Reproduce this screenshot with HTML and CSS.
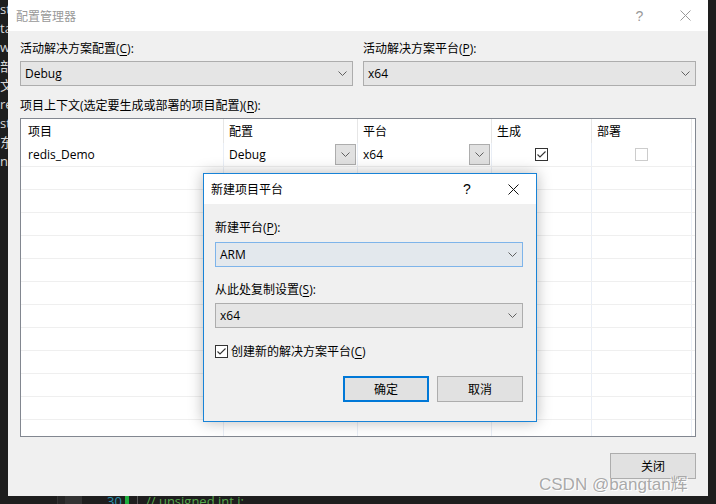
FILE: index.html
```html
<!DOCTYPE html>
<html lang="zh-CN">
<head>
    <meta charset="UTF-8">
    <meta name="viewport" content="width=device-width, initial-scale=1.0">
    <title>配置管理器</title>
    <link rel="stylesheet" href="styles.css">
</head>
<body>
  <!-- IDE behind the dialogs -->
  <div class="ide-side">
    <div>st</div>
    <div>ta</div>
    <div>w</div>
    <div>部</div>
    <div>文</div>
    <div>re</div>
    <div>st</div>
    <div>东</div>
    <div>nc</div>
  </div>

  <!-- Configuration Manager -->
  <div class="window">
    <div class="titlebar">
      <span class="title">配置管理器</span>
      <span class="help">?</span>
      <span class="close">
        <svg width="11" height="11" viewBox="0 0 11 11"><path d="M0.5 0.5 L10.5 10.5 M10.5 0.5 L0.5 10.5" stroke="#9a9a9a" stroke-width="1" fill="none"/></svg>
      </span>
    </div>

    <div class="window-body">
      <div class="top-fields">
        <div class="field">
          <div class="label">活动解决方案配置(<u>C</u>):</div>
          <div class="combo">
            <span>Debug</span>
            <svg class="chevron" width="9" height="5" viewBox="0 0 9 5"><path d="M0.5 0.5 L4.5 4.5 L8.5 0.5" stroke="#606060" fill="none"/></svg>
          </div>
        </div>
        <div class="field">
          <div class="label">活动解决方案平台(<u>P</u>):</div>
          <div class="combo">
            <span>x64</span>
            <svg class="chevron" width="9" height="5" viewBox="0 0 9 5"><path d="M0.5 0.5 L4.5 4.5 L8.5 0.5" stroke="#606060" fill="none"/></svg>
          </div>
        </div>
      </div>

      <div class="label grid-label">项目上下文(选定要生成或部署的项目配置)(<u>R</u>):</div>

      <div class="grid">
        <div class="grid-row head">
          <div class="cell first-col">项目</div>
          <div class="cell">配置</div>
          <div class="cell">平台</div>
          <div class="cell">生成</div>
          <div class="cell">部署</div>
          <div class="cell"></div>
        </div>
        <div class="grid-row tall">
          <div class="cell first-col">redis_Demo</div>
          <div class="cell drop">
            <span>Debug</span>
            <span class="drop-btn"><svg width="9" height="5" viewBox="0 0 9 5"><path d="M0.5 0.5 L4.5 4.5 L8.5 0.5" stroke="#606060" fill="none"/></svg></span>
          </div>
          <div class="cell drop">
            <span>x64</span>
            <span class="drop-btn"><svg width="9" height="5" viewBox="0 0 9 5"><path d="M0.5 0.5 L4.5 4.5 L8.5 0.5" stroke="#606060" fill="none"/></svg></span>
          </div>
          <div class="cell center">
            <span class="checkbox"><svg width="11" height="11" viewBox="0 0 11 11"><path d="M1.5 5.5 L4 8 L9.5 2.5" stroke="#333" stroke-width="1.1" fill="none"/></svg></span>
          </div>
          <div class="cell center"><span class="checkbox disabled"></span></div>
          <div class="cell"></div>
        </div>
        <div class="grid-row"><div class="cell"></div><div class="cell"></div><div class="cell"></div><div class="cell"></div><div class="cell"></div><div class="cell"></div></div>
        <div class="grid-row"><div class="cell"></div><div class="cell"></div><div class="cell"></div><div class="cell"></div><div class="cell"></div><div class="cell"></div></div>
        <div class="grid-row"><div class="cell"></div><div class="cell"></div><div class="cell"></div><div class="cell"></div><div class="cell"></div><div class="cell"></div></div>
        <div class="grid-row"><div class="cell"></div><div class="cell"></div><div class="cell"></div><div class="cell"></div><div class="cell"></div><div class="cell"></div></div>
        <div class="grid-row"><div class="cell"></div><div class="cell"></div><div class="cell"></div><div class="cell"></div><div class="cell"></div><div class="cell"></div></div>
        <div class="grid-row"><div class="cell"></div><div class="cell"></div><div class="cell"></div><div class="cell"></div><div class="cell"></div><div class="cell"></div></div>
        <div class="grid-row"><div class="cell"></div><div class="cell"></div><div class="cell"></div><div class="cell"></div><div class="cell"></div><div class="cell"></div></div>
        <div class="grid-row"><div class="cell"></div><div class="cell"></div><div class="cell"></div><div class="cell"></div><div class="cell"></div><div class="cell"></div></div>
        <div class="grid-row"><div class="cell"></div><div class="cell"></div><div class="cell"></div><div class="cell"></div><div class="cell"></div><div class="cell"></div></div>
        <div class="grid-row"><div class="cell"></div><div class="cell"></div><div class="cell"></div><div class="cell"></div><div class="cell"></div><div class="cell"></div></div>
        <div class="grid-row"><div class="cell"></div><div class="cell"></div><div class="cell"></div><div class="cell"></div><div class="cell"></div><div class="cell"></div></div>
        <div class="grid-row"><div class="cell"></div><div class="cell"></div><div class="cell"></div><div class="cell"></div><div class="cell"></div><div class="cell"></div></div>
      </div>

      <div class="footer">
        <button class="btn">关闭</button>
      </div>
    </div>
  </div>

  <div class="ide-right"></div>

  <!-- code editor strip under the window -->
  <div class="ide-bottom">
    <span class="gutter-a"></span>
    <span class="gutter-b"></span>
    <span class="line-no">30</span>
    <span class="change-bar"></span>
    <span class="fold-line"></span>
    <span class="code">// unsigned int i;</span>
  </div>

  <!-- New Project Platform dialog -->
  <div class="dialog">
    <div class="titlebar dialog-titlebar">
      <span class="title">新建项目平台</span>
      <span class="help">?</span>
      <span class="close">
        <svg width="11" height="11" viewBox="0 0 11 11"><path d="M0.5 0.5 L10.5 10.5 M10.5 0.5 L0.5 10.5" stroke="#111" stroke-width="1" fill="none"/></svg>
      </span>
    </div>
    <div class="dialog-body">
      <div class="label">新建平台(<u>P</u>):</div>
      <div class="combo focused">
        <span>ARM</span>
        <svg class="chevron" width="9" height="5" viewBox="0 0 9 5"><path d="M0.5 0.5 L4.5 4.5 L8.5 0.5" stroke="#606060" fill="none"/></svg>
      </div>
      <div class="label copy-label">从此处复制设置(<u>S</u>):</div>
      <div class="combo">
        <span>x64</span>
        <svg class="chevron" width="9" height="5" viewBox="0 0 9 5"><path d="M0.5 0.5 L4.5 4.5 L8.5 0.5" stroke="#606060" fill="none"/></svg>
      </div>
      <div class="check-row">
        <span class="checkbox"><svg width="11" height="11" viewBox="0 0 11 11"><path d="M1.5 5.5 L4 8 L9.5 2.5" stroke="#333" stroke-width="1.1" fill="none"/></svg></span>
        <span>创建新的解决方案平台(<u>C</u>)</span>
      </div>
      <div class="dialog-buttons">
        <button class="btn default">确定</button>
        <button class="btn">取消</button>
      </div>
    </div>
  </div>

  <div class="watermark">CSDN @bangtan辉</div>
</body>
</html>
```

FILE: styles.css
```css
* {
    box-sizing: border-box;
}

body {
    margin: 0;
    width: 716px;
    height: 504px;
    overflow: hidden;
    position: relative;
    background-color: #1e1e1e;
    display: grid;
    grid-template-columns: 8px 700px 8px;
    grid-template-rows: 496px 8px;
    font-family: "Open Sans", "Noto Sans CJK SC", sans-serif;
    font-size: 12px;
    color: #000;
}

u {
    text-decoration-thickness: 1px;
    text-underline-offset: 2px;
}

/* IDE around the window */
.ide-side {
    overflow: hidden;
    white-space: nowrap;
    color: #d6d6d6;
    font-size: 13px;
    line-height: 19px;
    padding-top: 0;
}

.ide-right {
    background-color: #1e1e1e;
}

.ide-bottom {
    grid-column: 1 / 4;
    display: flex;
    overflow: hidden;
    height: 8px;
    font-size: 13px;
    line-height: 13px;
}

.ide-bottom > span {
    flex-shrink: 0;
    margin-top: -1px;
}

.gutter-a {
    width: 8px;
    margin-left: 57px;
    background-color: #262626;
    border-left: 1px solid #333;
}

.gutter-b {
    width: 17px;
    background-color: #333;
}

.line-no {
    margin-left: 25px;
    color: #2b91af;
    width: 18px;
}

.change-bar {
    width: 4px;
    background-color: #1fae3e;
}

.fold-line {
    width: 1px;
    margin-left: 8px;
    background-color: #555;
}

.code {
    margin-left: 8px;
    color: #57a64a;
}

/* Main window */
.window {
    background-color: #f0f0f0;
    display: flex;
    flex-direction: column;
}

.titlebar {
    height: 31px;
    background-color: #fff;
    display: flex;
    align-items: center;
    padding-left: 8px;
    flex-shrink: 0;
}

.titlebar .title {
    flex: 1;
    color: #999;
}

.titlebar .help {
    width: 45px;
    text-align: center;
    color: #999;
    font-family: "Liberation Sans", sans-serif;
    font-size: 14px;
}

.titlebar .close {
    width: 46px;
    display: flex;
    justify-content: center;
}

.window-body {
    padding: 9px 12px 0 12px;
    display: flex;
    flex-direction: column;
}

.label {
    line-height: 18px;
    height: 18px;
    white-space: nowrap;
}

.top-fields {
    display: flex;
    gap: 10px;
}

.field {
    flex: 1;
}

.combo {
    margin-top: 3px;
    height: 25px;
    border: 1px solid #adadad;
    background-color: #e5e5e5;
    display: flex;
    align-items: center;
    justify-content: space-between;
    padding: 0 5px 0 4px;
}

.grid-label {
    margin-top: 11px;
    margin-bottom: 3px;
}

.grid {
    height: 319px;
    border: 1px solid #828790;
    background-color: #fff;
    overflow: hidden;
}

.grid-row {
    display: grid;
    grid-template-columns: 203px 134px 134px 100px 100px 1fr;
    height: 23px;
    border-bottom: 1px solid #efefef;
}

.grid-row.head {
    height: 24px;
    border-bottom: none;
}

.grid-row.tall {
    height: 24px;
}

.cell {
    border-right: 1px solid #e9eef6;
    padding-left: 5px;
    display: flex;
    align-items: center;
    white-space: nowrap;
}

.head .cell {
    border-right-color: #e6e6e6;
}

.cell:last-child {
    border-right: none;
}

.cell.first-col {
    padding-left: 7px;
}

.cell.drop {
    justify-content: space-between;
    padding-right: 1px;
}

.cell.center {
    justify-content: center;
    padding-left: 0;
}

.drop-btn {
    width: 21px;
    height: 21px;
    border: 1px solid #adadad;
    background-color: #e1e1e1;
    display: flex;
    align-items: center;
    justify-content: center;
}

.checkbox {
    width: 13px;
    height: 13px;
    border: 1px solid #333;
    background-color: #fff;
    display: inline-flex;
    align-items: center;
    justify-content: center;
}

.checkbox.disabled {
    border-color: #cccccc;
}

.footer {
    margin-top: 16px;
    display: flex;
    justify-content: flex-end;
}

.btn {
    width: 86px;
    height: 26px;
    border: 1px solid #adadad;
    background-color: #e1e1e1;
    font-family: "Open Sans", "Noto Sans CJK SC", sans-serif;
    font-size: 12px;
    color: #000;
    padding: 0;
}

/* New project platform dialog */
.dialog {
    position: absolute;
    left: 203px;
    top: 173px;
    width: 334px;
    height: 249px;
    border: 1px solid #1883d7;
    background-color: #f0f0f0;
    box-shadow: 0 0 14px rgba(0, 0, 0, 0.28);
    display: flex;
    flex-direction: column;
}

.dialog-titlebar {
    height: 30px;
    padding-left: 7px;
}

.dialog-titlebar .title,
.dialog-titlebar .help {
    color: #000;
}

.dialog-titlebar .help {
    width: 46px;
}

.dialog-body {
    padding: 15px 13px 0 11px;
    display: flex;
    flex-direction: column;
}

.dialog-body .combo {
    margin-top: 5px;
}

.combo.focused {
    border-color: #7eb4ea;
    background-color: #e3e8ed;
}

.copy-label {
    margin-top: 14px;
}

.dialog-body .copy-label + .combo {
    margin-top: 4px;
}

.check-row {
    margin-top: 14px;
    height: 18px;
    display: flex;
    align-items: center;
    gap: 3px;
    white-space: nowrap;
}

.dialog-buttons {
    margin-top: 16px;
    display: flex;
    justify-content: flex-end;
    gap: 8px;
}

.btn.default {
    border: 2px solid #0078d7;
}

.watermark {
    position: absolute;
    left: 539px;
    top: 474px;
    font-family: "Liberation Sans", "Noto Sans CJK SC", sans-serif;
    font-size: 17px;
    line-height: 22px;
    color: #a9a9a9;
    text-shadow: 1px 1px 0 #fff, -1px 0 0 rgba(255, 255, 255, 0.7);
    white-space: nowrap;
}
```
